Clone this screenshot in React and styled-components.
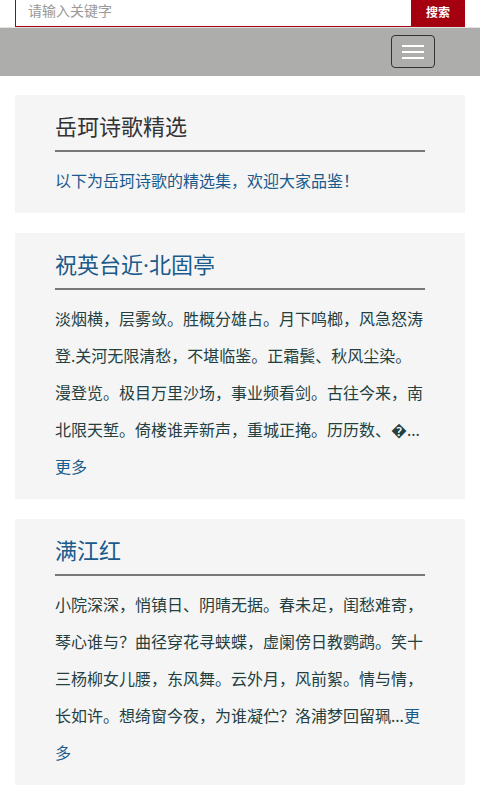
import React from "react";
import styled, { createGlobalStyle } from "styled-components";

const GlobalStyle = createGlobalStyle`
  html, body { margin: 0; padding: 0; background: #fff; }
  body { font-family: "Noto Sans", "Noto Sans CJK SC", sans-serif; }
  * { box-sizing: border-box; }
`;

const SearchRow = styled.form`
  display: flex;
  height: 34px;
  margin: -7px 15px 0;
`;

const SearchInput = styled.input`
  flex: 1;
  min-width: 0;
  height: 100%;
  border: 1px solid #a4000f;
  border-right: none;
  padding: 0 12px;
  font-family: inherit;
  font-size: 14px;
  line-height: 20px;
  color: #333;
  outline: none;
  &::placeholder { color: #999; }
`;

const SearchButton = styled.button`
  width: 54px;
  height: 100%;
  border: none;
  background: #a4000f;
  color: #fff;
  font-family: inherit;
  font-size: 12px;
  font-weight: bold;
  padding: 3px 0 0;
`;

const NavBar = styled.nav`
  display: flex;
  align-items: center;
  justify-content: flex-end;
  height: 49px;
  border-top: 1px solid #e2e2e2;
  background: #adadab;
  padding: 0 45px 1px 0;
`;

const Toggle = styled.button`
  display: flex;
  flex-direction: column;
  align-items: center;
  justify-content: center;
  gap: 4px;
  width: 44px;
  height: 33px;
  border: 1px solid #333;
  border-radius: 4px;
  background: transparent;
  padding: 0;
`;

const Bar = styled.span`
  display: block;
  width: 22px;
  height: 2px;
  background: #fff;
`;

const Content = styled.main`
  display: flex;
  flex-direction: column;
  gap: 20px;
  padding: 19px 15px 20px;
`;

const Card = styled.section`
  background: #f5f5f5;
  padding: 16px 40px 13px;
`;

const Title = styled.h2`
  margin: 0;
  font-size: 22px;
  line-height: 30px;
  font-weight: normal;
  color: ${(p) => (p.$link ? "#1a5a8c" : "#333")};
`;

const Divider = styled.hr`
  margin: 9px 0 0;
  border: none;
  height: 2px;
  background: #777;
`;

const Body = styled.p`
  margin: 11px 0 0;
  font-size: 16px;
  line-height: 37px;
  color: ${(p) => (p.$link ? "#1a5a8c" : "#243f3f")};
`;

const More = styled.a`
  color: #1a5a8c;
  text-decoration: none;
`;

const poems = [
  {
    title: "祝英台近·北固亭",
    text: "淡烟横，层雾敛。胜概分雄占。月下鸣榔，风急怒涛登.关河无限清愁，不堪临鉴。正霜鬓、秋风尘染。漫登览。极目万里沙场，事业频看剑。古往今来，南北限天堑。倚楼谁弄新声，重城正掩。历历数、�...",
  },
  {
    title: "满江红",
    text: "小院深深，悄镇日、阴晴无据。春未足，闺愁难寄，琴心谁与？曲径穿花寻蛱蝶，虚阑傍日教鹦鹉。笑十三杨柳女儿腰，东风舞。云外月，风前絮。情与情，长如许。想绮窗今夜，为谁凝伫？洛浦梦回留珮...",
  },
];

export default function App() {
  return (
    <>
      <GlobalStyle />
      <SearchRow onSubmit={(e) => e.preventDefault()}>
        <SearchInput placeholder="请输入关键字" />
        <SearchButton type="submit">搜索</SearchButton>
      </SearchRow>
      <NavBar>
        <Toggle type="button" aria-label="菜单">
          <Bar />
          <Bar />
          <Bar />
        </Toggle>
      </NavBar>
      <Content>
        <Card>
          <Title>岳珂诗歌精选</Title>
          <Divider />
          <Body $link>以下为岳珂诗歌的精选集，欢迎大家品鉴！</Body>
        </Card>
        {poems.map((p) => (
          <Card key={p.title}>
            <Title $link>{p.title}</Title>
            <Divider />
            <Body>
              {p.text}
              <More href="#">更多</More>
            </Body>
          </Card>
        ))}
      </Content>
    </>
  );
}
